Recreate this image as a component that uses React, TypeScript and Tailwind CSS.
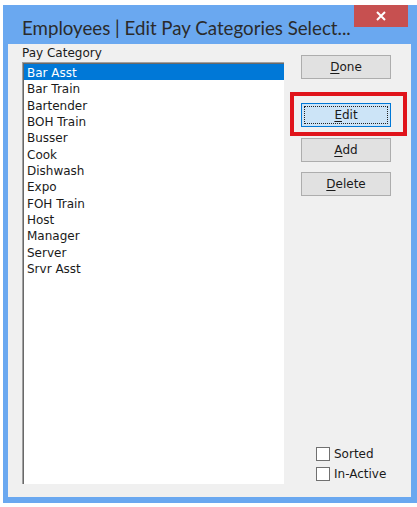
import React from 'react';

const categories = [
  'Bar Asst',
  'Bar Train',
  'Bartender',
  'BOH Train',
  'Busser',
  'Cook',
  'Dishwash',
  'Expo',
  'FOH Train',
  'Host',
  'Manager',
  'Server',
  'Srvr Asst',
];

const ui = "font-['DejaVu_Sans',sans-serif] text-[12px] text-[#1a1a1a]";

function Btn({ hot, rest, focus }: { hot: string; rest: string; focus?: boolean }) {
  if (focus) {
    return (
      <div className="relative">
        <button className="flex h-[24px] w-[90px] items-center justify-center border border-[#0078d7] bg-[#cce4f7] p-[2px]">
          <span className="flex h-full w-full items-center justify-center border border-dotted border-[#222]">
            <u className="underline-offset-2">{hot}</u>
            {rest}
          </span>
        </button>
        {/* red annotation box drawn over the screenshot */}
        <div className="pointer-events-none absolute -left-[11px] -top-[11px] h-[44px] w-[117px] border-[4px] border-[#e0141b]" />
      </div>
    );
  }
  return (
    <button className="flex h-[24px] w-[90px] items-center justify-center border border-[#adadad] bg-[#e1e1e1]">
      <u className="underline-offset-2">{hot}</u>
      {rest}
    </button>
  );
}

function Check({ label }: { label: string }) {
  return (
    <label className="flex h-[20px] items-center gap-[4px]">
      <span className="h-[14px] w-[14px] border border-[#707070] bg-white" />
      <span>{label}</span>
    </label>
  );
}

export default function App() {
  return (
    <div className={`h-[507px] w-[417px] bg-white pl-[3px] pt-[5px] ${ui}`}>
      <div className="flex h-[498px] w-[414px] flex-col bg-[#6aa8f0]">
        {/* title bar */}
        <div className="flex h-[39px] shrink-0 items-start">
          <div className="whitespace-nowrap pl-[19px] pt-[11px] font-['Lato',sans-serif] text-[18.7px] leading-[24px] text-[#2b2b2b]">
            Employees | Edit Pay Categories Select...
          </div>
          <div className="ml-auto mr-[9px] flex h-[22px] w-[54px] shrink-0 items-center justify-center bg-[#c75050]">
            <svg width="10" height="10" viewBox="0 0 10 10">
              <path d="M1 1L9 9M9 1L1 9" stroke="white" strokeWidth="2" />
            </svg>
          </div>
        </div>

        {/* client area */}
        <div className="mb-[6px] ml-[5px] mr-[6px] flex flex-1 bg-[#f0f0f0] pl-[14px]">
          <div className="flex flex-col">
            <div className="h-[18px] pt-[2px] leading-[15px]">Pay Category</div>
            <div className="h-[422px] w-[262px] border-l border-t border-[#a0a0a0] border-b-[#404040] border-r-[#404040]">
              <div className="h-full w-full border-l border-t border-[#696969] bg-white">
                {categories.map((c, i) => (
                  <div
                    key={c}
                    className={`h-[16.33px] pl-[3px] pt-[2px] leading-[14px] ${i === 0 ? 'bg-[#0078d7] text-white' : ''}`}
                  >
                    {c}
                  </div>
                ))}
              </div>
            </div>
          </div>

          <div className="ml-[17px] flex flex-col pt-[11px]">
            <Btn hot="D" rest="one" />
            <div className="mt-[24px]">
              <Btn hot="E" rest="dit" focus />
            </div>
            <div className="mt-[11px]">
              <Btn hot="A" rest="dd" />
            </div>
            <div className="mt-[10px]">
              <Btn hot="D" rest="elete" />
            </div>
            <div className="mt-auto mb-[13px] flex flex-col pl-[15px]">
              <Check label="Sorted" />
              <Check label="In-Active" />
            </div>
          </div>
        </div>
      </div>
    </div>
  );
}
